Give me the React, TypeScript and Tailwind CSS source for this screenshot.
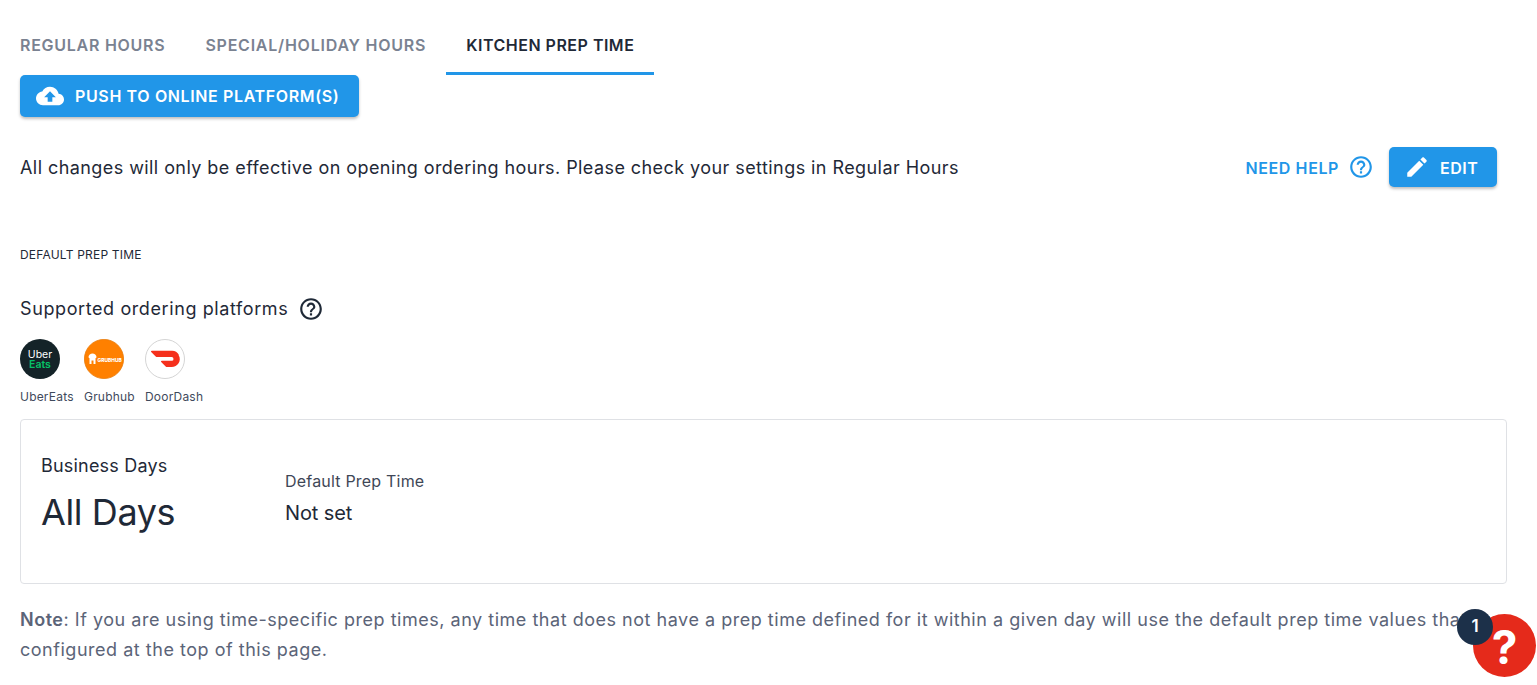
import React from "react";

const font = { fontFamily: '"Inter", "Noto Sans", sans-serif' };

function HelpCircle({ className }: { className: string }) {
  return (
    <svg viewBox="0 0 24 24" className={className} fill="currentColor">
      <path d="M11 18h2v-2h-2v2zm1-16C6.48 2 2 6.48 2 12s4.48 10 10 10 10-4.48 10-10S17.52 2 12 2zm0 18c-4.41 0-8-3.59-8-8s3.59-8 8-8 8 3.59 8 8-3.59 8-8 8zm0-14c-2.21 0-4 1.79-4 4h2c0-1.1.9-2 2-2s2 .9 2 2c0 2-3 1.75-3 5h2c0-2.25 3-2.5 3-5 0-2.21-1.79-4-4-4z" />
    </svg>
  );
}

function Platform({ label, children, className }: { label: string; children: React.ReactNode; className: string }) {
  return (
    <div className={`flex flex-col items-start ${className}`}>
      <div className="w-10 h-10">{children}</div>
      <span className="mt-[10px] text-[12px] leading-[16px] tracking-[0.2px] text-[#3f4a5c] whitespace-nowrap">{label}</span>
    </div>
  );
}

export default function App() {
  return (
    <div className="relative w-[1537px] h-[685px] overflow-hidden bg-white text-[#1f2937]" style={font}>
      <div className="flex h-[75px] items-stretch">
        <div className="px-5 pt-[33px] text-[16px] leading-6 font-semibold tracking-[0.73px] text-[#7a8291] whitespace-nowrap">REGULAR HOURS</div>
        <div className="px-5 pt-[33px] text-[16px] leading-6 font-semibold tracking-[0.77px] text-[#7a8291] whitespace-nowrap">SPECIAL/HOLIDAY HOURS</div>
        <div className="px-5 pt-[33px] text-[16px] leading-6 font-semibold tracking-[0.5px] text-[#1f2937] whitespace-nowrap border-b-[3px] border-[#2196e8]">KITCHEN PREP TIME</div>
      </div>

      <div className="pl-5 pr-[30px]">
        <button className="flex items-center h-[42px] w-[339px] pl-4 rounded-[5px] bg-[#2196e8] text-white text-[16px] font-semibold tracking-[0.63px] shadow-[0_2px_3px_rgba(0,0,0,0.25)] whitespace-nowrap">
          <svg viewBox="0 0 24 24" className="w-7 h-7 mr-[11px]" fill="currentColor">
            <path d="M19.35 10.04C18.67 6.59 15.64 4 12 4 9.11 4 6.6 5.64 5.35 8.04 2.34 8.36 0 10.91 0 14c0 3.31 2.69 6 6 6h13c2.76 0 5-2.24 5-5 0-2.64-2.05-4.78-4.65-4.96zM14 13v4h-4v-4H7l5-5 5 5h-3z" />
          </svg>
          <span>PUSH TO ONLINE PLATFORM(S)</span>
        </button>

        <div className="flex items-center justify-between h-[40px] mt-[30px] pr-[10px]">
          <p className="pt-px text-[18px] tracking-[0.43px] text-[#1f2937] whitespace-nowrap">All changes will only be effective on opening ordering hours. Please check your settings in Regular Hours</p>
          <div className="flex items-center">
            <span className="pt-[2px] text-[16px] font-semibold tracking-[0.6px] text-[#2196e8] whitespace-nowrap">NEED HELP</span>
            <HelpCircle className="w-[26px] h-[26px] ml-[9px] text-[#2196e8]" />
            <button className="flex items-center h-10 w-[108px] ml-[15px] pl-[15px] rounded-[5px] bg-[#2196e8] text-white text-[16px] font-semibold tracking-[0.5px] shadow-[0_2px_3px_rgba(0,0,0,0.25)]">
              <svg viewBox="0 0 24 24" className="w-[26px] h-[26px] mr-[10px]" fill="currentColor">
                <path d="M3 17.25V21h3.75L17.81 9.94l-3.75-3.75L3 17.25zM20.71 7.04c.39-.39.39-1.02 0-1.41l-2.34-2.34c-.39-.39-1.02-.39-1.41 0l-1.83 1.83 3.75 3.75 1.83-1.83z" />
              </svg>
              <span className="pt-px">EDIT</span>
            </button>
          </div>
        </div>

        <div className="mt-[60px] text-[12px] leading-4 tracking-[0.2px] text-[#1f2937]">DEFAULT PREP TIME</div>

        <div className="flex items-center mt-[33px] h-6">
          <span className="text-[18px] tracking-[0.6px] text-[#1f2937] whitespace-nowrap">Supported ordering platforms</span>
          <HelpCircle className="w-[26px] h-[26px] ml-[10px] mt-[1px] text-[#1f2937]" />
        </div>

        <div className="flex mt-[19px]">
          <Platform label="UberEats" className="w-[64px]">
            <svg viewBox="0 0 40 40" className="w-10 h-10">
              <circle cx="20" cy="20" r="20" fill="#142328" />
              <text x="20" y="19" textAnchor="middle" fontSize="10.5" fontWeight="400" fill="#fff" fontFamily="Inter, sans-serif">Uber</text>
              <text x="20" y="28.5" textAnchor="middle" fontSize="10.5" fontWeight="600" fill="#06c167" fontFamily="Inter, sans-serif">Eats</text>
            </svg>
          </Platform>
          <Platform label="Grubhub" className="w-[61px]">
            <svg viewBox="0 0 40 40" className="w-10 h-10">
              <circle cx="20" cy="20" r="19.6" fill="#ff8000" stroke="#e87a08" strokeWidth="0.8" />
              <path d="M4.5 18c0-1.8 2-3.5 4-3.5s4 1.7 4 3.5c0 .7-.4 1.1-1 1.3V25H9.5v-3.5h-2V25H5.5v-5.7c-.6-.2-1-.6-1-1.3z" fill="#fff" />
              <text x="13.5" y="22.5" fontSize="4.9" fontWeight="800" fill="#fff" fontFamily="Inter, sans-serif">GRUBHUB</text>
            </svg>
          </Platform>
          <Platform label="DoorDash" className="w-[60px]">
            <svg viewBox="0 0 40 40" className="w-10 h-10">
              <circle cx="20" cy="20" r="19.5" fill="#fff" stroke="#d4d4d4" />
              <g transform="translate(6 5.5) scale(1.2)">
                <path d="M23.071 8.409a6.09 6.09 0 00-5.396-3.228H.584A.589.589 0 00.17 6.184L3.894 9.93a1.752 1.752 0 001.242.516h12.049a1.554 1.554 0 11.031 3.108H8.91a.589.589 0 00-.415 1.003l3.725 3.747a1.75 1.75 0 001.242.516h3.757c4.887 0 8.584-5.225 5.852-9.91" fill="#f5301c" />
              </g>
            </svg>
          </Platform>
        </div>

        <div className="flex h-[165px] mt-[14px] border border-[#dfe1e5] rounded">
          <div className="w-[264px] pl-5 pt-[34px]">
            <div className="text-[18px] leading-6 tracking-[0.2px] text-[#1f2937]">Business Days</div>
            <div className="mt-[10px] text-[36px] leading-[48px] tracking-[-0.4px] text-[#1f2937]">All Days</div>
          </div>
          <div className="pt-[49px]">
            <div className="text-[16px] leading-6 tracking-[0.2px] text-[#3f4757]">Default Prep Time</div>
            <div className="mt-[8px] text-[20px] leading-6 tracking-[-0.1px] text-[#1f2937]">Not set</div>
          </div>
        </div>

        <p className="mt-[21px] text-[18px] leading-[30px] tracking-[0.52px] text-[#5b6478]">
          <span className="font-semibold">Note</span>: If you are using time-specific prep times, any time that does not have a prep time defined for it within a given day will use the default prep time values that are configured at the top of this page.
        </p>
      </div>

      <div className="absolute left-[1473px] top-[614px] w-[63px] h-[63px] rounded-full bg-[#e52a1b] flex items-center justify-center text-white text-[46px] font-bold leading-none pt-[2px]">?</div>
      <div className="absolute left-[1457px] top-[609px] w-9 h-9 rounded-full bg-[#1c3049] flex items-center justify-center text-white text-[17px] font-semibold">1</div>
    </div>
  );
}
